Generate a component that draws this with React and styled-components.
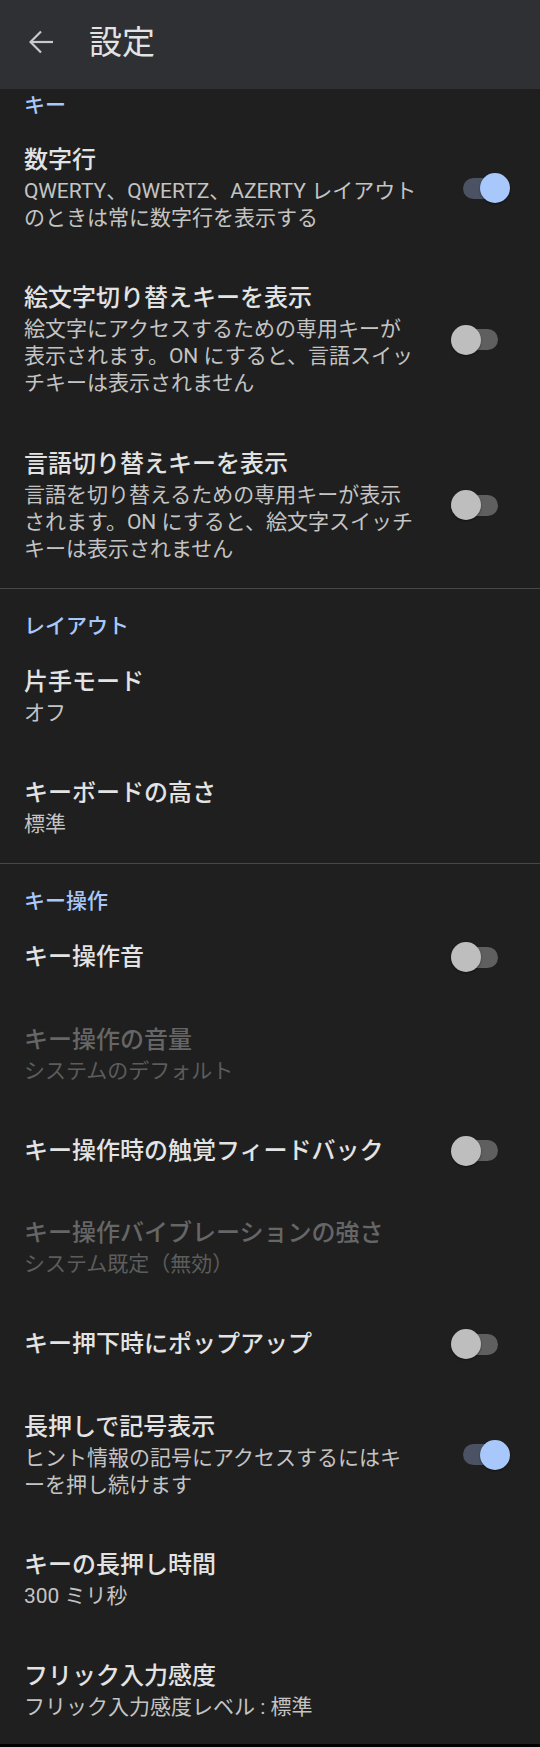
import React from "react";
import styled, { createGlobalStyle } from "styled-components";

const Global = createGlobalStyle`
  html, body { margin: 0; padding: 0; background: #1f1f1f; }
  body { font-family: Roboto, "Noto Sans CJK JP", "Noto Sans", sans-serif; }
  * { box-sizing: border-box; }
`;

const Screen = styled.div`
  width: 540px;
  height: 1747px;
  display: flex;
  flex-direction: column;
  background: #1f1f1f;
  overflow: hidden;
`;

const AppBar = styled.header`
  flex: 0 0 89px;
  display: flex;
  align-items: center;
  padding: 0 0 5px 29px;
  background: #2e3034;
`;

const BackButton = styled.button`
  width: 24px;
  height: 24px;
  padding: 0;
  border: 0;
  background: none;
  display: flex;
  color: #c8c9cb;
`;

const BarTitle = styled.h1`
  margin: 0 0 0 36px;
  font-size: 33px;
  line-height: 1;
  font-weight: 400;
  color: #e3e3e3;
`;

const List = styled.main`
  flex: 1;
  overflow: hidden;
`;

const Category = styled.section`
  padding-top: ${(p) => (p.$first ? 3 : 24)}px;
  border-top: ${(p) => (p.$first ? "none" : "1px solid #474747")};
`;

const CategoryTitle = styled.h2`
  margin: 0;
  padding: 0 24px ${(p) => (p.$first ? 0 : 1)}px;
  font-size: 21px;
  line-height: 27px;
  font-weight: 500;
  color: #a8c7fa;
`;

const Item = styled.div`
  display: flex;
  align-items: center;
  padding: 25px 30px 25.25px 24px;
`;

const Texts = styled.div`
  flex: 1;
  min-width: 0;
  display: flex;
  flex-direction: column;
  gap: 2px;
`;

const Title = styled.div`
  font-size: 24px;
  line-height: 32px;
  font-weight: 500;
  white-space: nowrap;
  color: ${(p) => (p.$disabled ? "#666666" : "#e3e3e3")};
`;

const Summary = styled.div`
  font-size: 21px;
  line-height: 27px;
  font-weight: 400;
  white-space: nowrap;
  color: ${(p) => (p.$disabled ? "#5c5c5c" : "#c4c4c4")};
`;

const Switch = styled.div`
  position: relative;
  flex: none;
  width: 59px;
  height: 30px;
  margin-left: 12px;
`;

const Track = styled.div`
  position: absolute;
  left: 12px;
  top: 4.5px;
  width: 35px;
  height: 21px;
  border-radius: 10.5px;
  background: ${(p) => (p.$on ? "#4b5263" : "#5f5f5f")};
`;

const Thumb = styled.div`
  position: absolute;
  top: 0;
  left: ${(p) => (p.$on ? 29 : 0)}px;
  width: 30px;
  height: 30px;
  border-radius: 50%;
  background: ${(p) => (p.$on ? "#a8c7fa" : "#bebebe")};
  box-shadow: 0 1px 2px rgba(0, 0, 0, 0.45);
`;

const NavEdge = styled.div`
  flex: 0 0 3px;
  background: #000;
`;

const BackArrow = () => (
  <svg width="24" height="24" viewBox="0 0 24 24" fill="none" stroke="currentColor" strokeWidth="2.2">
    <path d="M1.5 12H24" />
    <path d="M12 1.5L1.5 12L12 22.5" />
  </svg>
);

const Toggle = ({ on }) => (
  <Switch role="switch" aria-checked={on}>
    <Track $on={on} />
    <Thumb $on={on} />
  </Switch>
);

const categories = [
  {
    title: "キー",
    items: [
      { title: "数字行", summary: ["QWERTY、QWERTZ、AZERTY レイアウト", "のときは常に数字行を表示する"], toggle: true },
      {
        title: "絵文字切り替えキーを表示",
        summary: ["絵文字にアクセスするための専用キーが", "表示されます。ON にすると、言語スイッ", "チキーは表示されません"],
        toggle: false,
      },
      {
        title: "言語切り替えキーを表示",
        summary: ["言語を切り替えるための専用キーが表示", "されます。ON にすると、絵文字スイッチ", "キーは表示されません"],
        toggle: false,
      },
    ],
  },
  {
    title: "レイアウト",
    items: [
      { title: "片手モード", summary: ["オフ"] },
      { title: "キーボードの高さ", summary: ["標準"] },
    ],
  },
  {
    title: "キー操作",
    items: [
      { title: "キー操作音", toggle: false },
      { title: "キー操作の音量", summary: ["システムのデフォルト"], disabled: true },
      { title: "キー操作時の触覚フィードバック", toggle: false },
      { title: "キー操作バイブレーションの強さ", summary: ["システム既定（無効）"], disabled: true },
      { title: "キー押下時にポップアップ", toggle: false },
      { title: "長押しで記号表示", summary: ["ヒント情報の記号にアクセスするにはキ", "ーを押し続けます"], toggle: true },
      { title: "キーの長押し時間", summary: ["300 ミリ秒"] },
      { title: "フリック入力感度", summary: ["フリック入力感度レベル : 標準"] },
    ],
  },
];

export default function App() {
  return (
    <>
      <Global />
      <Screen>
        <AppBar>
          <BackButton aria-label="戻る">
            <BackArrow />
          </BackButton>
          <BarTitle>設定</BarTitle>
        </AppBar>
        <List>
          {categories.map((cat, ci) => (
            <Category key={cat.title} $first={ci === 0}>
              <CategoryTitle $first={ci === 0}>{cat.title}</CategoryTitle>
              {cat.items.map((it) => (
                <Item key={it.title}>
                  <Texts>
                    <Title $disabled={it.disabled}>{it.title}</Title>
                    {it.summary && (
                      <Summary $disabled={it.disabled}>
                        {it.summary.map((line, i) => (
                          <React.Fragment key={i}>
                            {i > 0 && <br />}
                            {line}
                          </React.Fragment>
                        ))}
                      </Summary>
                    )}
                  </Texts>
                  {typeof it.toggle === "boolean" && <Toggle on={it.toggle} />}
                </Item>
              ))}
            </Category>
          ))}
        </List>
        <NavEdge />
      </Screen>
    </>
  );
}
